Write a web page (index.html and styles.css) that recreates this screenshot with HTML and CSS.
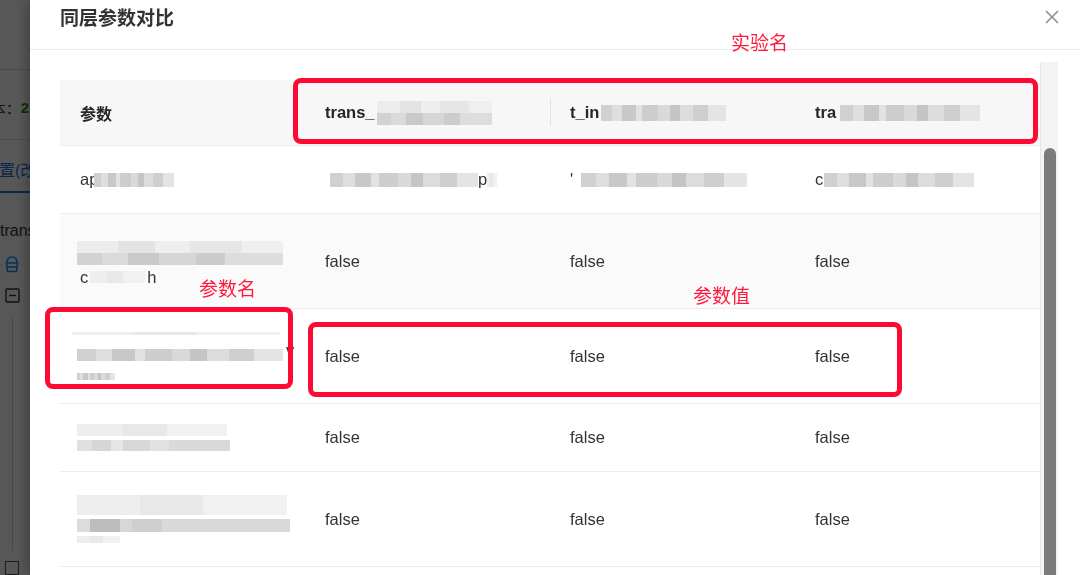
FILE: index.html
```html
<!DOCTYPE html>
<html lang="zh-CN">
<head>
    <meta charset="UTF-8">
    <meta name="viewport" content="width=device-width, initial-scale=1.0">
    <title>同层参数对比</title>
    <link rel="stylesheet" href="styles.css">
</head>
<body>
    <!-- page behind the drawer, only the left edge shows -->
    <div class="app-side">
        <div class="side-top"></div>
        <div class="side-version"><span>版本：</span><span class="num">2</span></div>
        <div class="side-tab"><span>置(改动)</span></div>
        <div class="side-name">trans</div>
        <div class="side-icon">
            <svg width="14" height="18" viewBox="0 0 14 18" fill="none" stroke="#1890ff" stroke-width="1.6">
                <path d="M2 8 Q2 2 7 2 Q12 2 12 8"/>
                <path d="M1.5 8 H12.5 L11.5 16.5 H2.5 Z"/>
                <path d="M2 12 H12"/>
            </svg>
        </div>
        <div class="side-icon">
            <svg width="15" height="15" viewBox="0 0 15 15" fill="none" stroke="#333" stroke-width="1.4">
                <rect x="1" y="1" width="13" height="13" rx="1"/>
                <path d="M4 7.5 H11"/>
            </svg>
        </div>
        <div class="side-tree"></div>
        <div class="side-box"></div>
    </div>
    <div class="mask"></div>

    <div class="drawer">
        <div class="drawer-header">
            <span class="drawer-title">同层参数对比</span>
            <span class="drawer-close">
                <svg width="16" height="16" viewBox="0 0 16 16" stroke="#8c8c8c" stroke-width="1.5">
                    <path d="M2 2 L14 14 M14 2 L2 14"/>
                </svg>
            </span>
        </div>
        <div class="drawer-body">
            <div class="table">
                <div class="row head">
                    <div class="cell">参数</div>
                    <div class="cell">trans_<span class="mosaic two m-h2"></span></div>
                    <div class="cell sep">t_in<span class="mosaic m-h3"></span></div>
                    <div class="cell">tra<span class="mosaic m-h4"></span></div>
                </div>
                <div class="row">
                    <div class="cell">ap<span class="mosaic m-r1a"></span></div>
                    <div class="cell"><span class="mosaic m-r1b"></span>p<span class="mosaic faint m-tail"></span></div>
                    <div class="cell">'<span class="mosaic m-r1c"></span></div>
                    <div class="cell">c<span class="mosaic m-r1d"></span></div>
                </div>
                <div class="row tall hover">
                    <div class="cell">
                        <div class="stack">
                            <span class="mosaic two m-r2a"></span>
                            <span class="line">c<span class="mosaic faint m-r2b"></span>h</span>
                        </div>
                    </div>
                    <div class="cell">false</div>
                    <div class="cell">false</div>
                    <div class="cell">false</div>
                </div>
                <div class="row tall">
                    <div class="cell">
                        <div class="stack">
                            <span class="mosaic faint thin m-r3a"></span>
                            <span class="line"><span class="mosaic m-r3b"></span>v</span>
                            <span class="mosaic small m-r3c"></span>
                        </div>
                    </div>
                    <div class="cell">false</div>
                    <div class="cell">false</div>
                    <div class="cell">false</div>
                </div>
                <div class="row">
                    <div class="cell">
                        <div class="stack">
                            <span class="mosaic faint m-r4a"></span>
                            <span class="mosaic light m-r4b"></span>
                        </div>
                    </div>
                    <div class="cell">false</div>
                    <div class="cell">false</div>
                    <div class="cell">false</div>
                </div>
                <div class="row tall">
                    <div class="cell">
                        <div class="stack">
                            <span class="mosaic faint m-r5a"></span>
                            <span class="mosaic dark-start m-r5b"></span>
                            <span class="mosaic faint small m-r5c"></span>
                        </div>
                    </div>
                    <div class="cell">false</div>
                    <div class="cell">false</div>
                    <div class="cell">false</div>
                </div>
                <div class="row tall">
                    <div class="cell"></div>
                    <div class="cell"></div>
                    <div class="cell"></div>
                    <div class="cell"></div>
                </div>
            </div>
            <div class="scrollbar"><div class="thumb"></div></div>
        </div>
    </div>

    <!-- red annotations drawn on the screenshot -->
    <div class="marks">
        <div class="mark-box box-exp"></div>
        <div class="mark-box box-name"></div>
        <div class="mark-box box-value"></div>
        <div class="mark-label label-exp">实验名</div>
        <div class="mark-label label-name">参数名</div>
        <div class="mark-label label-value">参数值</div>
    </div>
</body>
</html>
```

FILE: styles.css
```css
* {
    box-sizing: border-box;
}
html, body {
    margin: 0;
    height: 100%;
}
body {
    font-family: "Liberation Sans", "Noto Sans CJK SC", sans-serif;
    color: #333;
    background: #fff;
    overflow: hidden;
}

/* page behind */
.app-side {
    width: 30px;
    height: 100%;
    display: flex;
    flex-direction: column;
    font-size: 15px;
}
.side-top {
    height: 71px;
    border-bottom: 1px solid #d9d9d9;
}
.side-version {
    height: 70px;
    display: flex;
    justify-content: flex-end;
    align-items: center;
    padding-top: 6px;
    padding-right: 1px;
    white-space: nowrap;
    border-bottom: 1px solid #e3e3e3;
}
.side-version .num {
    color: #2d8a1c;
    font-weight: bold;
}
.side-tab {
    height: 54px;
    display: flex;
    align-items: center;
    white-space: nowrap;
    color: #1677d9;
    font-size: 16px;
    border-bottom: 2px solid #1677d9;
    padding-top: 6px;
}
.side-tab span {
    margin-left: -1px;
}
.side-name {
    margin-top: 28px;
    white-space: nowrap;
    font-size: 16px;
    line-height: 20px;
}
.side-icon {
    margin: 14px 0 0 5px;
    height: 18px;
}
.side-icon + .side-icon {
    margin-top: 15px;
}
.side-tree {
    margin: 12px 0 0 12px;
    width: 1px;
    height: 235px;
    background: #cfcfcf;
}
.side-box {
    margin: 10px 0 0 5px;
    width: 14px;
    height: 14px;
    border: 1px solid #555;
}
.mask {
    position: fixed;
    inset: 0;
    background: rgba(0, 0, 0, 0.66);
}

/* drawer */
.drawer {
    position: fixed;
    top: 0;
    bottom: 0;
    left: 30px;
    right: 0;
    background: #fff;
    box-shadow: -4px 0 10px rgba(0, 0, 0, 0.25);
    display: flex;
    flex-direction: column;
}
.drawer-header {
    height: 50px;
    padding: 5px 20px 0 30px;
    border-bottom: 1px solid #ececec;
    display: flex;
    justify-content: space-between;
    align-items: flex-start;
}
.drawer-title {
    font-family: "Noto Sans CJK SC", sans-serif;
    font-size: 19px;
    line-height: 24px;
    font-weight: bold;
    color: #333;
}
.drawer-close {
    margin-top: 4px;
    width: 16px;
    height: 16px;
}
.drawer-body {
    flex: 1;
    display: flex;
    padding: 12px 22px 0 30px;
    overflow: hidden;
}
.table {
    flex: 1;
    min-width: 0;
    padding-top: 18px;
}
.row {
    display: grid;
    grid-template-columns: repeat(4, minmax(0, 1fr));
    height: 68px;
    border-bottom: 1px solid #ececec;
    align-items: center;
    font-size: 16.5px;
    color: #333;
}
.row.tall {
    height: 95px;
}
.row.hover {
    background: #fafafa;
}
.row.head {
    height: 66px;
    background: #f7f7f7;
    font-weight: bold;
    color: #262626;
}
.row.head .cell:first-child {
    font-family: "Noto Sans CJK SC", sans-serif;
    font-size: 16px;
}
.cell {
    padding: 0 20px;
    white-space: nowrap;
    display: flex;
    align-items: center;
    height: 100%;
    position: relative;
    min-width: 0;
}
.cell.sep::before {
    content: "";
    position: absolute;
    left: 0;
    top: 19px;
    bottom: 19px;
    width: 1px;
    background: #e2e2e2;
}
.stack {
    display: flex;
    flex-direction: column;
    align-items: flex-start;
    gap: 4px;
}
.stack .line {
    display: flex;
    align-items: center;
    line-height: 16px;
}

/* blurred patches */
.mosaic {
    display: inline-block;
    flex-shrink: 0;
    height: 14px;
    background-image: linear-gradient(90deg, #d0d0d0 0 9%, #dedede 9% 17%, #c8c8c8 17% 28%, #e2e2e2 28% 33%, #cdcdcd 33% 46%, #d9d9d9 46% 55%, #c5c5c5 55% 63%, #dcdcdc 63% 74%, #cfcfcf 74% 86%, #e4e4e4 86% 100%);
    filter: blur(0.6px);
}
.mosaic.two {
    height: 24px;
    background-image:
        linear-gradient(90deg, #ececec 0 20%, #e3e3e3 20% 38%, #eeeeee 38% 55%, #e6e6e6 55% 80%, #efefef 80% 100%),
        linear-gradient(90deg, #d2d2d2 0 12%, #dadada 12% 25%, #c9c9c9 25% 40%, #d6d6d6 40% 58%, #cccccc 58% 72%, #dddddd 72% 100%);
    background-size: 100% 50%, 100% 50%;
    background-position: top, bottom;
    background-repeat: no-repeat;
}
.mosaic.faint {
    background-image: linear-gradient(90deg, #eeeeee 0 30%, #e8e8e8 30% 60%, #f1f1f1 60% 100%);
}
.mosaic.light {
    height: 11px;
    background-image: linear-gradient(90deg, #e0e0e0 0 10%, #d6d6d6 10% 22%, #e6e6e6 22% 30%, #d8d8d8 30% 48%, #e2e2e2 48% 60%, #d9d9d9 60% 100%);
}
.mosaic.thin {
    height: 3px;
}
.mosaic.small {
    height: 7px;
}
.mosaic.dark-start {
    height: 13px;
    background-image: linear-gradient(90deg, #dcdcdc 0 6%, #bdbdbd 6% 20%, #d7d7d7 20% 26%, #cfcfcf 26% 40%, #d9d9d9 40% 100%);
}
.m-h2 { width: 115px; margin-left: 2px; }
.m-h3 { width: 125px; height: 16px; margin-left: 2px; }
.m-h4 { width: 140px; height: 16px; margin-left: 4px; }
.m-r1a { width: 80px; margin-left: -4px; }
.m-r1b { width: 148px; margin-left: 5px; }
.m-tail { width: 10px; }
.m-r1c { width: 166px; margin-left: 8px; }
.m-r1d { width: 150px; margin-left: 1px; }
.m-r2a { width: 206px; height: 26px; margin-left: -3px; margin-top: 4px; }
.m-r2b { width: 55px; height: 12px; margin: 0 2px; }
.m-r3a { width: 208px; margin-left: -8px; }
.m-r3b { width: 206px; height: 12px; margin: 10px 3px 0 -3px; }
.m-r3c { width: 38px; margin: 8px 0 0 -3px; }
.m-r4a { width: 150px; height: 12px; margin-left: -3px; }
.m-r4b { width: 153px; margin-left: -3px; }
.m-r5a { width: 210px; height: 20px; margin-left: -3px; }
.m-r5b { width: 213px; margin-left: -3px; }
.m-r5c { width: 43px; margin-left: -3px; }

.scrollbar {
    width: 18px;
    background: #f3f3f3;
    border-left: 1px solid #e6e6e6;
    padding: 86px 2px 0 3px;
}
.thumb {
    height: 500px;
    background: #7b7b7b;
    border-radius: 6px;
}

/* annotations */
.marks {
    position: fixed;
    inset: 0;
    pointer-events: none;
}
.mark-box {
    position: absolute;
    border: 5px solid #fc0a34;
    border-radius: 8px;
}
.box-exp {
    left: 293px;
    top: 78px;
    width: 745px;
    height: 66px;
}
.box-name {
    left: 45px;
    top: 307px;
    width: 248px;
    height: 82px;
}
.box-value {
    left: 308px;
    top: 322px;
    width: 594px;
    height: 75px;
}
.mark-label {
    position: absolute;
    font-family: "Noto Sans CJK SC", sans-serif;
    font-size: 19px;
    line-height: 22px;
    color: #ff1a3d;
}
.label-exp {
    left: 731px;
    top: 31px;
}
.label-name {
    left: 199px;
    top: 277px;
}
.label-value {
    left: 693px;
    top: 284px;
}
```
